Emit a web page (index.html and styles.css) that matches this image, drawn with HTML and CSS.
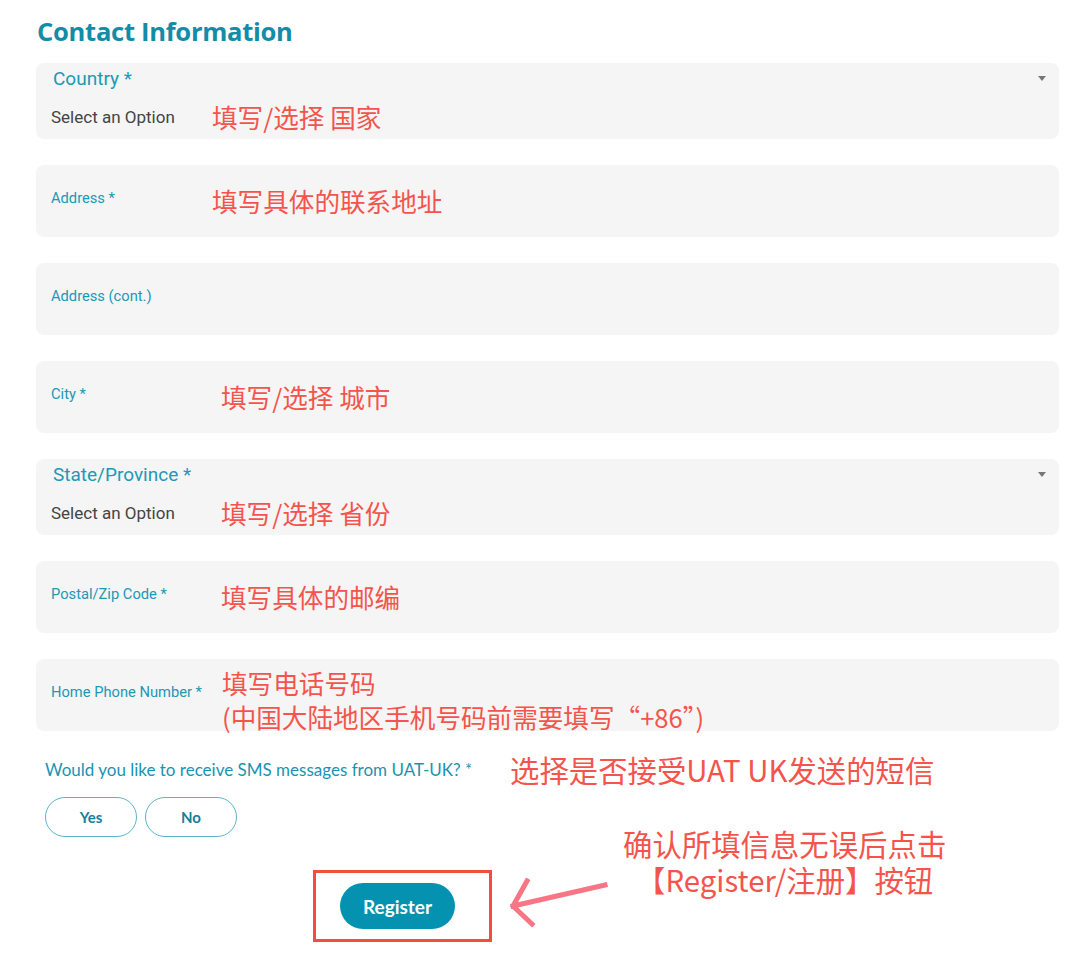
FILE: index.html
```html
<!DOCTYPE html>
<html lang="en">
<head>
    <meta charset="UTF-8">
    <meta name="viewport" content="width=device-width, initial-scale=1.0">
    <title>Contact Information</title>
    <link rel="stylesheet" href="styles.css">
</head>
<body>
    <div class="container">
        <h2 class="section-title">Contact Information</h2>

        <div class="field field-select">
            <div class="select-top">
                <span class="select-label">Country *</span>
                <span class="caret"></span>
            </div>
            <div class="select-row">
                <span class="select-value">Select an Option</span>
                <span class="note">填写/选择 国家</span>
            </div>
        </div>

        <div class="field">
            <span class="label">Address *</span>
            <span class="note">填写具体的联系地址</span>
        </div>

        <div class="field">
            <span class="label">Address (cont.)</span>
        </div>

        <div class="field">
            <span class="label label-wide">City *</span>
            <span class="note">填写/选择 城市</span>
        </div>

        <div class="field field-select">
            <div class="select-top">
                <span class="select-label">State/Province *</span>
                <span class="caret"></span>
            </div>
            <div class="select-row">
                <span class="select-value select-value-wide">Select an Option</span>
                <span class="note">填写/选择 省份</span>
            </div>
        </div>

        <div class="field">
            <span class="label label-wide">Postal/Zip Code *</span>
            <span class="note">填写具体的邮编</span>
        </div>

        <div class="field">
            <span class="label label-phone">Home Phone Number *</span>
            <span class="note note-multi">填写电话号码<br>(中国大陆地区手机号码前需要填写“+86”)</span>
        </div>

        <div class="sms">
            <span class="sms-question">Would you like to receive SMS messages from UAT-UK? *</span>
            <span class="note note-big">选择是否接受UAT UK发送的短信</span>
        </div>

        <div class="choices">
            <button type="button" class="pill">Yes</button>
            <button type="button" class="pill">No</button>
        </div>

        <div class="submit-row">
            <div class="highlight">
                <button type="submit" class="register">Register</button>
            </div>
            <svg class="arrow" width="110" height="56" viewBox="0 0 110 56">
                <path d="M102 8 L10 29 M24 4 L10 29 L29 47" fill="none" stroke="#f87586" stroke-width="5" stroke-linecap="square" stroke-linejoin="miter"/>
            </svg>
            <div class="note note-big note-center">确认所填信息无误后点击<br>【Register/注册】按钮</div>
        </div>
    </div>
</body>
</html>
```

FILE: styles.css
```css
body {
    margin: 0;
    background-color: #ffffff;
    font-family: Roboto, "Noto Sans", sans-serif;
}

.container {
    width: 1023px;
    padding: 14px 0 0 36px;
}

.section-title {
    margin: 0 0 14px 1px;
    font-family: "Open Sans", sans-serif;
    font-size: 25.6px;
    font-weight: 700;
    color: #138ca7;
    letter-spacing: -0.3px;
}

.field {
    display: flex;
    align-items: center;
    height: 72px;
    margin-bottom: 26px;
    padding-left: 15px;
    background-color: #f5f5f5;
    border-radius: 8px;
}

.field-select {
    display: block;
    height: 76px;
    padding: 3px 15px 0 15px;
    box-sizing: border-box;
}

.select-top {
    display: flex;
    justify-content: space-between;
    align-items: center;
    height: 24px;
    padding-left: 2px;
}

.select-label {
    font-size: 19px;
    color: #2198b6;
}

.caret {
    width: 0;
    height: 0;
    margin-right: -2px;
    border-left: 4px solid transparent;
    border-right: 4px solid transparent;
    border-top: 5px solid #777777;
}

.select-row {
    display: flex;
    align-items: center;
    margin-top: 10px;
}

.select-value {
    width: 161px;
    font-size: 17px;
    color: #444444;
}

.select-value-wide {
    width: 170px;
}

.label {
    width: 161px;
    margin-top: -6px;
    font-size: 14.7px;
    color: #2198b6;
}

.label-wide {
    width: 170px;
}

.label-phone {
    width: 171px;
}

.note {
    font-family: "Noto Sans CJK SC", sans-serif;
    font-size: 25.6px;
    line-height: 34px;
    color: #f4544c;
}

.note-multi {
    margin-top: 10px;
}

.sms {
    display: flex;
    align-items: center;
    margin-top: -6px;
    padding-left: 9px;
}

.sms-question {
    width: 465px;
    font-family: Lato, sans-serif;
    font-size: 17px;
    color: #1a93b1;
}

.note-big {
    font-size: 29.4px;
    line-height: 36px;
}

.choices {
    display: flex;
    gap: 8px;
    margin-top: 10px;
    padding-left: 9px;
}

.pill {
    width: 92px;
    height: 40px;
    background-color: #ffffff;
    border: 1px solid #5ab5cb;
    border-radius: 20px;
    font-family: Lato, sans-serif;
    font-size: 15px;
    font-weight: 700;
    color: #1580a0;
    cursor: pointer;
}

.submit-row {
    display: flex;
    align-items: flex-start;
    margin-top: 27px;
    padding-left: 277px;
}

.highlight {
    display: flex;
    align-items: center;
    justify-content: center;
    width: 173px;
    height: 66px;
    margin-top: 6px;
    border: 3px solid #f24d3d;
}

.register {
    width: 115px;
    height: 46px;
    margin-right: 10px;
    background-color: #0592b1;
    border: none;
    border-radius: 23px;
    font-family: Lato, sans-serif;
    font-size: 19px;
    font-weight: 700;
    color: #ffffff;
    cursor: pointer;
}

.arrow {
    margin: 13px 0 0 11px;
}

.note-center {
    margin: -39px 0 0 10px;
    text-align: center;
}
```
